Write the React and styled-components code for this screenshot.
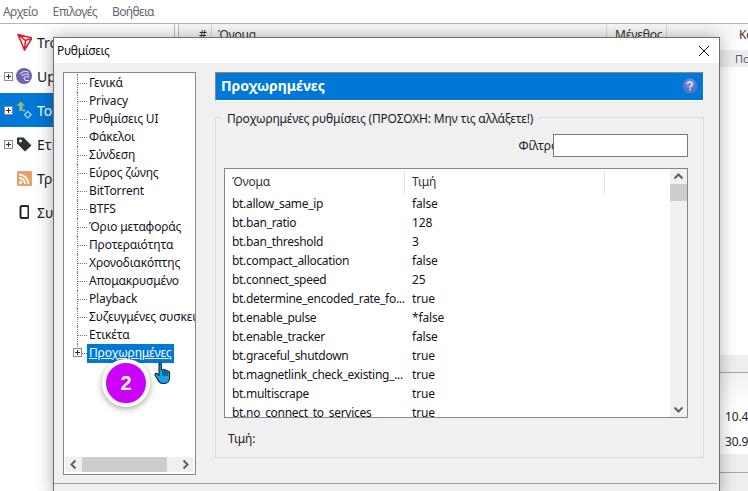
import React from 'react'
import styled, { createGlobalStyle } from 'styled-components'

const GlobalStyle = createGlobalStyle`
  html, body {
    margin: 0;
    height: 100%;
    overflow: hidden;
    background: #fff;
  }
  body {
    font-family: "Noto Sans", "Open Sans", "Liberation Sans", sans-serif;
    font-size: 12px;
    letter-spacing: -0.15px;
    color: #111;
  }
`

const Page = styled.div`
  position: relative;
  width: 748px;
  height: 491px;
  overflow: hidden;
  display: flex;
  flex-direction: column;
`

const MenuBar = styled.div`
  height: 23px;
  flex: none;
  display: flex;
  align-items: center;
  gap: 15px;
  padding-left: 3px;
  color: #666674;
  letter-spacing: -0.6px;
  border-bottom: 1px solid #b4b4b4;
`

const Main = styled.div`
  flex: 1;
  display: flex;
  min-height: 0;
`

const Sidebar = styled.div`
  width: 174px;
  flex: none;
  border-right: 1px solid #c0c0c0;
  padding-top: 1px;
`

const SideRow = styled.div`
  height: 34px;
  display: flex;
  align-items: center;
  padding-left: ${({ $indent }) => ($indent ? '16px' : '4px')};
  gap: 3px;
  font-size: 14px;
  letter-spacing: 0;
  color: ${({ $active }) => ($active ? '#fff' : '#1c1c28')};
  background: ${({ $active }) => ($active ? '#0078d7' : 'transparent')};
`

const PlusBox = styled.span`
  width: 9px;
  height: 9px;
  flex: none;
  box-sizing: border-box;
  border: 1px solid #8c8c8c;
  background: #fbfbfb;
  position: relative;
  &::before, &::after {
    content: '';
    position: absolute;
    background: #2a2a70;
  }
  &::before { left: 1px; top: 3px; width: 5px; height: 1px; }
  &::after { left: 3px; top: 1px; width: 1px; height: 5px; }
`

const IconSlot = styled.span`
  width: 16px;
  height: 18px;
  flex: none;
  display: flex;
  align-items: center;
  justify-content: center;
`

const SideText = styled.span`
  margin-left: 2px;
`

const Panel = styled.div`
  flex: 1;
  margin-left: 3px;
  border-left: 1px solid #c0c0c0;
  display: flex;
  flex-direction: column;
  min-width: 0;
`

const ColumnHead = styled.div`
  height: 26px;
  flex: none;
  display: flex;
  align-items: center;
  padding-left: 20px;
  box-sizing: border-box;
  color: #333;
  background: linear-gradient(#f7f7f7, #fff);
  white-space: nowrap;
`

const HeadCell = styled.span`
  width: ${({ $w }) => $w}px;
  flex: none;
  height: 26px;
  line-height: 22px;
  box-sizing: border-box;
  padding-left: ${({ $pad }) => $pad || 0}px;
  border-right: 1px solid ${({ $end }) => ($end ? 'transparent' : '#dcdcdc')};
`

const SubBand = styled.div`
  height: 17px;
  flex: none;
  padding-left: 556px;
  background: #ededed;
  color: #5f5f70;
  font-size: 11px;
  display: flex;
  align-items: center;
`

const Gap = styled.div`
  height: ${({ $h }) => $h}px;
  flex: none;
`

const GrayBand = styled.div`
  height: ${({ $h }) => $h}px;
  flex: none;
  background: ${({ $fade }) => ($fade ? 'linear-gradient(#f2f2f2, #fff)' : '#efefef')};
  border-bottom: ${({ $line }) => ($line ? '1px solid #a8a8a8' : 'none')};
`

const StatRow = styled.div`
  height: 25px;
  flex: none;
  padding-left: 546px;
  display: flex;
  align-items: center;
  color: #222;
  white-space: nowrap;
`

/* settings window, floats over the main app */
const Dialog = styled.div`
  position: absolute;
  left: 53px;
  top: 37px;
  width: 667px;
  height: 460px;
  box-sizing: border-box;
  background: #f0f0f0;
  border: 1px solid #6f6f6f;
  box-shadow: 0 0 16px rgba(0, 0, 0, 0.32);
  display: flex;
  flex-direction: column;
`

const TitleBar = styled.div`
  height: 25px;
  flex: none;
  background: #fff;
  display: flex;
  align-items: center;
  justify-content: space-between;
  padding: 0 9px 0 3px;
  color: #111;
  letter-spacing: -0.3px;
`

const CloseBtn = styled.svg`
  width: 12px;
  height: 12px;
  display: block;
`

const DialogBody = styled.div`
  height: 421px;
  flex: none;
  padding: 9px 13px 0 9px;
  box-sizing: border-box;
  display: flex;
  gap: 19px;
  border-bottom: 1px solid #a0a0a0;
  margin-right: 2px;
`

const TreeBox = styled.div`
  position: relative;
  width: 133px;
  height: 403px;
  flex: none;
  box-sizing: border-box;
  background: #fff;
  border: 1px solid #828790;
  display: flex;
  flex-direction: column;
`

const TreeList = styled.div`
  flex: 1;
  overflow: hidden;
  padding-top: 1px;
`

const TreeRow = styled.div`
  height: 18px;
  display: flex;
  align-items: center;
  padding-left: 9px;
  white-space: nowrap;
  position: relative;
`

const TreeLines = styled.span`
  width: 14px;
  height: 18px;
  flex: none;
  position: relative;
  &::before {
    content: '';
    position: absolute;
    left: 4px;
    top: 0;
    height: ${({ $last }) => ($last ? '9px' : '18px')};
    border-left: 1px dotted #777;
  }
  &::after {
    content: '';
    position: absolute;
    left: 5px;
    top: 9px;
    width: 9px;
    border-top: 1px dotted #777;
  }
`

const TreeText = styled.span`
  flex: none;
  padding: 0 2px;
  height: 19px;
  line-height: 18px;
  color: ${({ $on }) => ($on ? '#fff' : '#14141e')};
  background: ${({ $on }) => ($on ? '#0078d7' : 'transparent')};
  text-decoration: ${({ $on }) => ($on ? 'underline' : 'none')};
`

const TreePlus = styled(PlusBox)`
  position: absolute;
  left: 9px;
  top: 4px;
`

const HScroll = styled.div`
  height: 15px;
  flex: none;
  margin: 0 1px 2px;
  background: #f0f0f0;
  display: flex;
  align-items: center;
  justify-content: space-between;
`

const Arrow = styled.svg`
  width: 17px;
  height: 15px;
  flex: none;
  display: block;
`

const HThumb = styled.div`
  width: 85px;
  height: 15px;
  background: #cdcdcd;
`

const Badge = styled.div`
  position: absolute;
  left: 38px;
  top: 286px;
  width: 40px;
  height: 40px;
  border-radius: 50%;
  background: #cc00ff;
  border: 4px solid #fff;
  box-shadow: 0 2px 6px rgba(0, 0, 0, 0.35);
  color: #fff;
  font-size: 20px;
  font-weight: 700;
  font-family: "Liberation Sans", sans-serif;
  display: flex;
  align-items: center;
  justify-content: center;
`

const Cursor = styled.svg`
  position: absolute;
  left: 90px;
  top: 289px;
  width: 18px;
  height: 23px;
`

const RightCol = styled.div`
  flex: 1;
  min-width: 0;
  display: flex;
  flex-direction: column;
`

const Heading = styled.div`
  height: 29px;
  flex: none;
  box-sizing: border-box;
  background: #0078d7;
  border-top: 1px solid #8a8a8a;
  border-left: 1px solid #8a8a8a;
  border-bottom: 1px solid #fff;
  border-right: 1px solid #fff;
  color: #fff;
  font-size: 14px;
  font-weight: 700;
  letter-spacing: 0;
  display: flex;
  align-items: center;
  justify-content: space-between;
  padding: 0 5px 2px 5px;
`

const Group = styled.div`
  position: relative;
  margin-top: 16px;
  height: 341px;
  flex: none;
  box-sizing: border-box;
  border: 1px solid #dcdcdc;
  padding: 16px 15px 0 8px;
  display: flex;
  flex-direction: column;
`

const GroupTitle = styled.span`
  position: absolute;
  left: 6px;
  top: -8px;
  padding: 0 5px;
  background: #f0f0f0;
  color: #1a1a24;
  white-space: nowrap;
  letter-spacing: -0.18px;
`

const FilterRow = styled.div`
  height: 23px;
  flex: none;
  display: flex;
  justify-content: flex-end;
  align-items: center;
`

const FilterLabel = styled.label`
  color: #1a1a24;
  margin-right: -5px;
`

const FilterInput = styled.input`
  width: 135px;
  height: 23px;
  box-sizing: border-box;
  border: 1px solid #7a7a7a;
  background: #fff;
  margin: 0;
  padding: 0 3px;
  outline: none;
`

const ListBox = styled.div`
  margin-top: 11px;
  height: 250px;
  flex: none;
  box-sizing: border-box;
  background: #fff;
  border: 1px solid #828790;
  display: flex;
  overflow: hidden;
`

const ListMain = styled.div`
  flex: 1;
  min-width: 0;
  overflow: hidden;
`

const ListHead = styled.div`
  height: 25px;
  display: flex;
  align-items: center;
  color: #333;
`

const HeadCol = styled.div`
  width: ${({ $w }) => $w}px;
  flex: none;
  height: 24px;
  box-sizing: border-box;
  padding-left: 7px;
  line-height: 24px;
  border-right: 1px solid #e5e5e5;
`

const ListRow = styled.div`
  height: 19px;
  display: flex;
  align-items: center;
  color: #14141e;
  white-space: nowrap;
`

const NameCell = styled.span`
  width: 180px;
  flex: none;
  padding-left: 7px;
  box-sizing: border-box;
  letter-spacing: -0.3px;
`

const ValueCell = styled.span`
  padding-left: 7px;
`

const VScroll = styled.div`
  width: 17px;
  flex: none;
  background: #f0f0f0;
  display: flex;
  flex-direction: column;
`

const VThumb = styled.div`
  height: 17px;
  background: #cdcdcd;
`

const VSpace = styled.div`
  flex: 1;
`

const ValueLabel = styled.div`
  margin-top: 12px;
  margin-left: 4px;
  color: #1a1a24;
`

const treeItems = ['Γενικά', 'Privacy', 'Ρυθμίσεις UI', 'Φάκελοι', 'Σύνδεση', 'Εύρος ζώνης', 'BitTorrent', 'BTFS', 'Όριο μεταφοράς', 'Προτεραιότητα', 'Χρονοδιακόπτης', 'Απομακρυσμένο', 'Playback', 'Συζευγμένες συσκευές', 'Ετικέτα']

const settings = [
  ['bt.allow_same_ip', 'false'],
  ['bt.ban_ratio', '128'],
  ['bt.ban_threshold', '3'],
  ['bt.compact_allocation', 'false'],
  ['bt.connect_speed', '25'],
  ['bt.determine_encoded_rate_fo...', 'true'],
  ['bt.enable_pulse', '*false'],
  ['bt.enable_tracker', 'false'],
  ['bt.graceful_shutdown', 'true'],
  ['bt.magnetlink_check_existing_...', 'true'],
  ['bt.multiscrape', 'true'],
  ['bt.no_connect_to_services', 'true'],
]

const TronIcon = () => (
  <svg width="16" height="18" viewBox="-1 0 16 18">
    <path d="M1 1.5 L15 5 L7.5 17 Z M1 1.5 L8.5 7.5 L7.5 17 M15 5 L8.5 7.5" fill="none" stroke="#e3172f" strokeWidth="1.6" strokeLinejoin="round" />
  </svg>
)

const BittorrentIcon = () => (
  <svg width="16" height="16" viewBox="0 0 16 16">
    <circle cx="8" cy="8" r="8" fill="#6f63ad" />
    <path d="M13 4.5 A7 7 0 0 0 4 6 M13 7 A5 5 0 0 0 6 8 M13 9.5 A3.2 3.2 0 0 0 8 10 L9.5 12.5 H13" fill="none" stroke="#e9e6f5" strokeWidth="1.1" />
  </svg>
)

const TransferIcon = () => (
  <svg width="17" height="20" viewBox="0 0 17 20">
    <path d="M5 1 L9.5 5.5 H7 V11 H3.5 V5.5 H0.5 Z" fill="#8fbf7d" />
    <circle cx="8.5" cy="10.5" r="0.9" fill="#cfe6f7" />
    <path d="M9 15 L12.5 11.5 L16 15 L12.5 18.5 Z" fill="none" stroke="#a9d6f5" strokeWidth="1.3" />
  </svg>
)

const TagIcon = () => (
  <svg width="16" height="16" viewBox="0 0 16 16">
    <path d="M1 1.5 H7.5 L15.5 9.5 L9 15.5 L1 7.5 Z" fill="#2b2f36" />
    <circle cx="4.5" cy="5" r="1.4" fill="#fff" />
  </svg>
)

const RssIcon = () => (
  <svg width="15" height="15" viewBox="0 0 15 15">
    <rect width="15" height="15" rx="1.5" fill="#e8a06a" />
    <circle cx="3.6" cy="11.4" r="1.6" fill="#fff" />
    <path d="M2 7 A6 6 0 0 1 8 13 M2 3.6 A9.4 9.4 0 0 1 11.4 13" fill="none" stroke="#fff" strokeWidth="1.8" />
  </svg>
)

const PhoneIcon = () => (
  <svg width="10" height="14" viewBox="-0.5 0 10 14">
    <rect x="1" y="1" width="8" height="12" rx="1.6" fill="none" stroke="#23272e" strokeWidth="2" />
  </svg>
)

const HelpIcon = () => (
  <svg width="16" height="16" viewBox="0 0 16 16">
    <circle cx="8" cy="8" r="7.6" fill="#5b73c4" />
    <circle cx="8" cy="5.5" r="5" fill="#8497d6" opacity="0.6" />
    <path d="M5.6 6 C5.6 3.4 10.4 3.4 10.4 6 C10.4 7.8 8 7.6 8 9.4" fill="none" stroke="#eef1fb" strokeWidth="1.5" />
    <rect x="7.2" y="10.6" width="1.7" height="1.7" fill="#eef1fb" />
  </svg>
)

const HandCursor = () => (
  <Cursor viewBox="0 0 18 23">
    <path d="M5 1.5 C6 0.6 7.4 1 7.4 2.5 V8 L9 8 V7.6 C10 7 11 7.4 11 8.4 C12 7.8 13 8.2 13 9.2 C14 8.8 15.5 9.2 15.5 10.5 V16 C15.5 19 13.5 21.5 10.5 21.5 H8.5 C6.5 21.5 5 20 4 18 L1 13 C0.5 11.5 2.5 10.6 3.5 11.8 L5 13.5 Z" fill="#12a5ee" stroke="#10202e" strokeWidth="1.1" strokeLinejoin="round" />
    <path d="M9 9 V14 M11 9 V14 M13 10 V14" stroke="#10202e" strokeWidth="0.9" />
  </Cursor>
)

const Chevron = ({ d }) => (
  <Arrow viewBox="0 0 17 15">
    <path d={d} fill="none" stroke="#606060" strokeWidth="2" />
  </Arrow>
)

export default function App() {
  return (
    <Page>
      <GlobalStyle />
      <MenuBar>
        <span>Αρχείο</span>
        <span>Επιλογές</span>
        <span>Βοήθεια</span>
      </MenuBar>
      <Main>
        <Sidebar>
          <SideRow $indent><IconSlot><TronIcon /></IconSlot><SideText>Tron</SideText></SideRow>
          <SideRow><PlusBox /><IconSlot><BittorrentIcon /></IconSlot><SideText>Updates</SideText></SideRow>
          <SideRow $active><PlusBox /><IconSlot><TransferIcon /></IconSlot><SideText>Torrents</SideText></SideRow>
          <SideRow><PlusBox /><IconSlot><TagIcon /></IconSlot><SideText>Ετικέτες</SideText></SideRow>
          <SideRow $indent><IconSlot><RssIcon /></IconSlot><SideText>Τροφοδοσίες</SideText></SideRow>
          <SideRow $indent><IconSlot><PhoneIcon /></IconSlot><SideText>Συσκευές</SideText></SideRow>
        </Sidebar>
        <Panel>
          <ColumnHead>
            <HeadCell $w={13}>#</HeadCell>
            <HeadCell $w={395} $pad={6}>Όνομα</HeadCell>
            <HeadCell $w={60} $pad={8}>Μέγεθος</HeadCell>
            <HeadCell $w={82} $pad={72} $end>Κατάσταση</HeadCell>
          </ColumnHead>
          <SubBand>Πο</SubBand>
          <Gap $h={288} />
          <GrayBand $h={17} $line />
          <GrayBand $h={31} $fade />
          <StatRow>10.4</StatRow>
          <StatRow>30.97</StatRow>
          <GrayBand $h={18} $line />
          <GrayBand $h={20} />
        </Panel>
      </Main>

      <Dialog>
        <TitleBar>
          <span>Ρυθμίσεις</span>
          <CloseBtn viewBox="0 0 12 12">
            <path d="M1 1 L11 11 M11 1 L1 11" stroke="#111" strokeWidth="1" />
          </CloseBtn>
        </TitleBar>
        <DialogBody>
          <TreeBox>
            <TreeList>
              {treeItems.map((item) => (
                <TreeRow key={item}>
                  <TreeLines />
                  <TreeText>{item}</TreeText>
                </TreeRow>
              ))}
              <TreeRow>
                <TreeLines $last />
                <TreePlus />
                <TreeText $on>Προχωρημένες</TreeText>
              </TreeRow>
            </TreeList>
            <HScroll>
              <Chevron d="M10.5 3.5 L6.5 7.5 L10.5 11.5" />
              <HThumb />
              <VSpace />
              <Chevron d="M6.5 3.5 L10.5 7.5 L6.5 11.5" />
            </HScroll>
            <Badge>2</Badge>
            <HandCursor />
          </TreeBox>
          <RightCol>
            <Heading>
              <span>Προχωρημένες</span>
              <HelpIcon />
            </Heading>
            <Group>
              <GroupTitle>Προχωρημένες ρυθμίσεις (ΠΡΟΣΟΧΗ: Μην τις αλλάξετε!)</GroupTitle>
              <FilterRow>
                <FilterLabel>Φίλτρο</FilterLabel>
                <FilterInput />
              </FilterRow>
              <ListBox>
                <ListMain>
                  <ListHead>
                    <HeadCol $w={180}>Όνομα</HeadCol>
                    <HeadCol $w={200}>Τιμή</HeadCol>
                  </ListHead>
                  {settings.map(([name, value]) => (
                    <ListRow key={name}>
                      <NameCell>{name}</NameCell>
                      <ValueCell>{value}</ValueCell>
                    </ListRow>
                  ))}
                </ListMain>
                <VScroll>
                  <Chevron d="M4.5 9.5 L8.5 5.5 L12.5 9.5" />
                  <VThumb />
                  <VSpace />
                  <Chevron d="M4.5 5.5 L8.5 9.5 L12.5 5.5" />
                </VScroll>
              </ListBox>
              <ValueLabel>Τιμή:</ValueLabel>
            </Group>
          </RightCol>
        </DialogBody>
      </Dialog>
    </Page>
  )
}
